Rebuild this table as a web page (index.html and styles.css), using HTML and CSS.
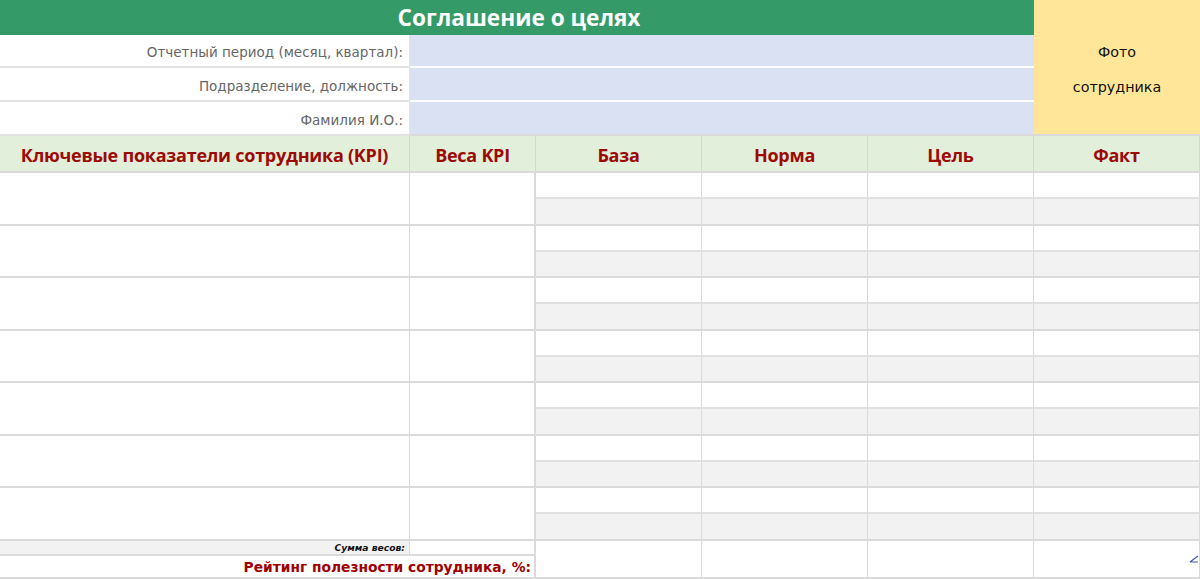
FILE: index.html
```html
<!DOCTYPE html>
<html lang="ru">
<head>
<meta charset="utf-8">
<title>Соглашение о целях</title>
<link rel="stylesheet" href="styles.css">
</head>
<body>
<div class="sheet">
  <div class="title">Соглашение о целях</div>
  <div class="photo"><span>Фото</span><span>сотрудника</span></div>

  <div class="label">Отчетный период (месяц, квартал):</div>
  <div class="value"></div>
  <div class="label">Подразделение, должность:</div>
  <div class="value"></div>
  <div class="label">Фамилия И.О.:</div>
  <div class="value last"></div>

  <div class="hd">Ключевые показатели сотрудника (KPI)</div>
  <div class="hd">Веса KPI</div>
  <div class="hd">База</div>
  <div class="hd">Норма</div>
  <div class="hd">Цель</div>
  <div class="hd">Факт</div>

  <div class="kpi"></div><div class="kpi"></div>
  <div class="c"></div><div class="c"></div><div class="c"></div><div class="c"></div>
  <div class="c g"></div><div class="c g"></div><div class="c g"></div><div class="c g"></div>

  <div class="kpi"></div><div class="kpi"></div>
  <div class="c"></div><div class="c"></div><div class="c"></div><div class="c"></div>
  <div class="c g"></div><div class="c g"></div><div class="c g"></div><div class="c g"></div>

  <div class="kpi"></div><div class="kpi"></div>
  <div class="c"></div><div class="c"></div><div class="c"></div><div class="c"></div>
  <div class="c g"></div><div class="c g"></div><div class="c g"></div><div class="c g"></div>

  <div class="kpi"></div><div class="kpi"></div>
  <div class="c"></div><div class="c"></div><div class="c"></div><div class="c"></div>
  <div class="c g"></div><div class="c g"></div><div class="c g"></div><div class="c g"></div>

  <div class="kpi"></div><div class="kpi"></div>
  <div class="c"></div><div class="c"></div><div class="c"></div><div class="c"></div>
  <div class="c g"></div><div class="c g"></div><div class="c g"></div><div class="c g"></div>

  <div class="kpi"></div><div class="kpi"></div>
  <div class="c"></div><div class="c"></div><div class="c"></div><div class="c"></div>
  <div class="c g"></div><div class="c g"></div><div class="c g"></div><div class="c g"></div>

  <div class="kpi"></div><div class="kpi"></div>
  <div class="c"></div><div class="c"></div><div class="c"></div><div class="c"></div>
  <div class="c g"></div><div class="c g"></div><div class="c g"></div><div class="c g"></div>

  <div class="sum-label">Сумма весов:</div>
  <div class="sum-val"></div>
  <div class="tot"></div><div class="tot"></div><div class="tot"></div><div class="tot last-col">
    <svg class="mark" width="10" height="8" viewBox="0 0 10 8"><path d="M1 7 L9 1 M1 7 H9" stroke="#3b5bab" stroke-width="1.2" fill="none"/></svg>
  </div>
  <div class="rating">Рейтинг полезности сотрудника, %:</div>
</div>
</body>
</html>
```
FILE: styles.css
```css
html, body {
  margin: 0;
  padding: 0;
  background: #ffffff;
  overflow: hidden;
}

.sheet {
  display: grid;
  grid-template-columns: 410px 126px 166px 166px 166px 166px;
  grid-template-rows: 35px 33px 34px 34px 37px repeat(14, 26.25px) 15px 23px;
  width: 1200px;
  font-family: "DejaVu Sans", Verdana, sans-serif;
}

.sheet > div {
  box-sizing: border-box;
}

.title {
  grid-column: 1 / 6;
  background: #349a67;
  color: #ffffff;
  font-family: "Open Sans", sans-serif;
  font-weight: 700;
  font-size: 22.6px;
  display: flex;
  align-items: center;
  justify-content: center;
  padding-bottom: 1px;
  padding-left: 4px;
}

.photo {
  grid-column: 6;
  grid-row: 1 / 5;
  background: #ffe699;
  border-bottom: 2px solid #dadada;
  display: flex;
  flex-direction: column;
  align-items: center;
  justify-content: center;
  font-size: 14.3px;
  line-height: 35px;
  color: #111111;
  padding-top: 5px;
}

.label {
  grid-column: 1;
  border-bottom: 2px solid #e2e2e2;
  border-right: 1px solid #e2e2e2;
  color: #666666;
  font-size: 13.5px;
  display: flex;
  align-items: center;
  justify-content: flex-end;
  padding-right: 6px;
  padding-top: 3px;
}

.value {
  grid-column: 2 / 6;
  background: #dae1f2;
  border-bottom: 2px solid #ffffff;
}

.value.last {
  border-bottom: 2px solid #dadada;
}

.hd {
  background: #e2efda;
  border-right: 1px solid #d6d6d6;
  border-bottom: 2px solid #dadada;
  color: #9c0a06;
  font-family: "Open Sans", sans-serif;
  font-weight: 700;
  font-size: 18px;
  display: flex;
  align-items: center;
  justify-content: center;
  letter-spacing: -0.25px;
  padding-top: 2px;
}

.kpi {
  grid-row: span 2;
  border-right: 1px solid #dadada;
  border-bottom: 2px solid #dadada;
}

.kpi + .kpi {
  border-right: 2px solid #dadada;
}

.c {
  border-right: 1px solid #dadada;
  border-bottom: 2px solid #e0e0e0;
}

.c.g {
  background: #f2f2f2;
  border-bottom: 2px solid #dadada;
}

.sum-label {
  background: #f2f2f2;
  border-right: 1px solid #dadada;
  border-bottom: 2px solid #dadada;
  font-size: 9.2px;
  font-weight: 700;
  font-style: italic;
  color: #111111;
  display: flex;
  align-items: center;
  justify-content: flex-end;
  padding-right: 4px;
}

.sum-val {
  border-right: 2px solid #dadada;
  border-bottom: 2px solid #dadada;
}

.tot {
  grid-row: span 2;
  border-right: 1px solid #dadada;
  border-bottom: 2px solid #dadada;
  position: relative;
}

.mark {
  position: absolute;
  right: 0;
  top: 14px;
}

.rating {
  grid-column: 1 / 3;
  border-right: 2px solid #dadada;
  border-bottom: 2px solid #dadada;
  color: #a00000;
  font-size: 13.8px;
  font-weight: 700;
  display: flex;
  align-items: center;
  justify-content: flex-end;
  padding-right: 3px;
  padding-top: 1px;
}
```
